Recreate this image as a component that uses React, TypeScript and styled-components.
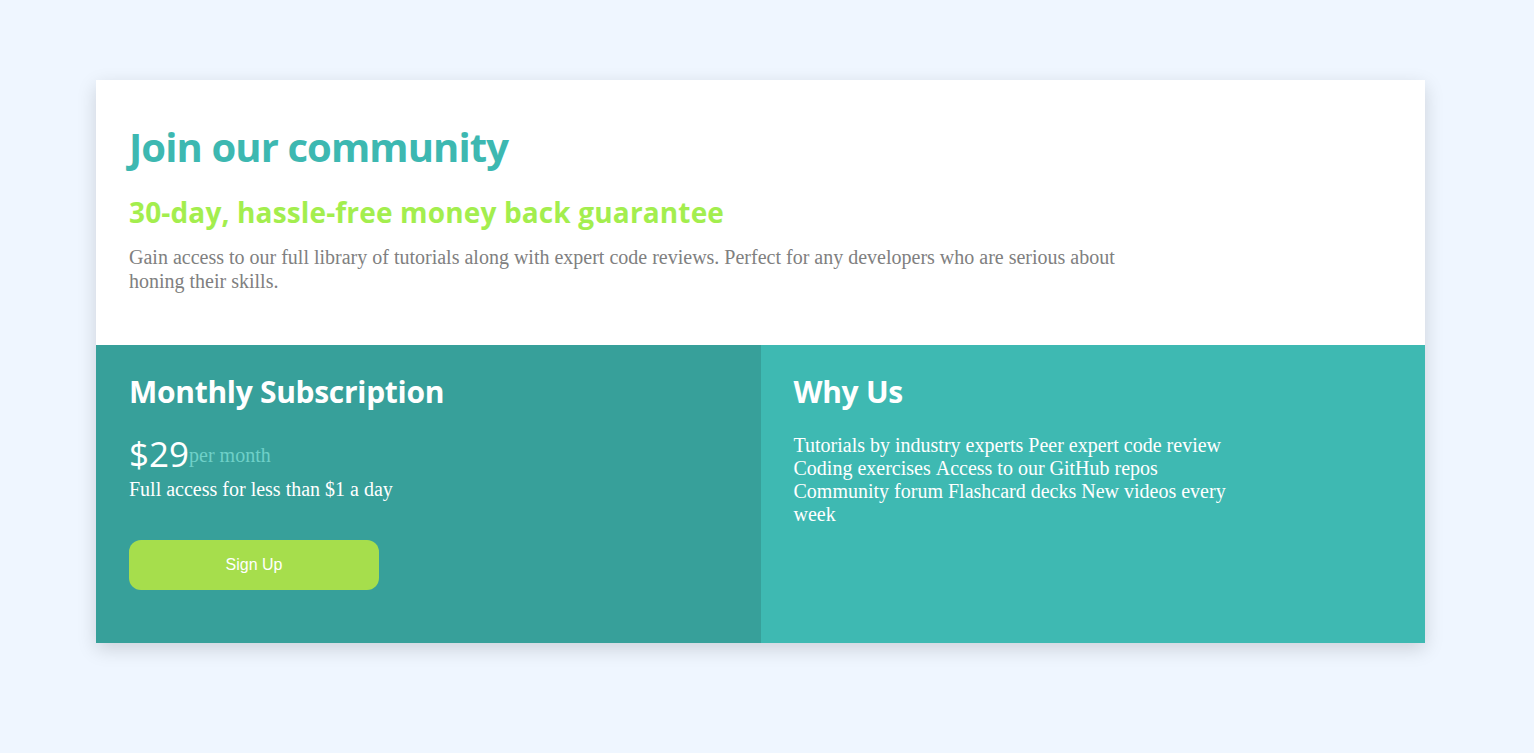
import React from "react";
import styled, { createGlobalStyle } from "styled-components";

const Global = createGlobalStyle`
  html, body { margin: 0; padding: 0; }
  body { background: #eff6ff; font-family: "Liberation Serif", "Times New Roman", serif; }
`;

const Page = styled.main`
  padding: 80px 109px 0 96px;
  min-height: 753px;
  box-sizing: border-box;
`;

const Card = styled.section`
  background: #ffffff;
  box-shadow: 0 6px 18px rgba(0, 0, 0, 0.15);
  display: flex;
  flex-direction: column;
`;

const Top = styled.div`
  padding: 39px 33px 52px;
`;

const Title = styled.h1`
  margin: 0;
  font-family: "Open Sans", "Noto Sans", sans-serif;
  font-weight: 700;
  font-size: 40px;
  line-height: 56px;
  color: #3db8b1;
  letter-spacing: -0.9px;
`;

const Sub = styled.h2`
  margin: 18px 0 0;
  font-family: "Open Sans", "Noto Sans", sans-serif;
  font-weight: 700;
  font-size: 28px;
  line-height: 38px;
  color: #a3ee4e;
  letter-spacing: 0.15px;
`;

const Lead = styled.p`
  margin: 14px 0 0;
  max-width: 1000px;
  font-size: 20px;
  line-height: 24px;
  color: #808080;
`;

const Bottom = styled.div`
  display: grid;
  grid-template-columns: 1fr 1fr;
  height: 298px;
`;

const Panel = styled.div<{ $bg: string }>`
  background: ${(p) => p.$bg};
  padding: 26px 33px 0 33px;
  color: #ffffff;
`;

const PanelTitle = styled.h3`
  margin: 0;
  font-family: "Open Sans", "Noto Sans", sans-serif;
  font-weight: 700;
  font-size: 30px;
  line-height: 42px;
  letter-spacing: -0.3px;
`;

const PriceRow = styled.div`
  margin-top: 21px;
  display: flex;
  align-items: flex-start;
  height: 40px;
`;

const Price = styled.span`
  font-family: "Open Sans", "Noto Sans", sans-serif;
  font-size: 35px;
  line-height: 40px;
`;

const Per = styled.span`
  margin-top: 10px;
  font-size: 20px;
  line-height: 23px;
  color: #6fd0c8;
`;

const Note = styled.p`
  margin: 3px 0 0;
  font-size: 20px;
  line-height: 24px;
`;

const Button = styled.button`
  display: block;
  margin-top: 39px;
  width: 250px;
  height: 50px;
  border: none;
  border-radius: 12px;
  background: #a6de4c;
  color: #ffffff;
  font-family: "Liberation Sans", Arial, sans-serif;
  font-size: 16px;
  cursor: pointer;
`;

const List = styled.ul`
  margin: 21px 0 0;
  padding: 0;
  list-style: none;
  max-width: 449px;
  font-size: 20px;
  line-height: 23px;
`;

const Item = styled.li`
  display: inline;
`;

const features = [
  "Tutorials by industry experts",
  "Peer expert code review",
  "Coding exercises",
  "Access to our GitHub repos",
  "Community forum",
  "Flashcard decks",
  "New videos every week",
];

export default function App() {
  return (
    <Page>
      <Global />
      <Card>
        <Top>
          <Title>Join our community</Title>
          <Sub>30-day, hassle-free money back guarantee</Sub>
          <Lead>
            Gain access to our full library of tutorials along with expert code reviews. Perfect for any
            developers who are serious about honing their skills.
          </Lead>
        </Top>
        <Bottom>
          <Panel $bg="#37a09a">
            <PanelTitle>Monthly Subscription</PanelTitle>
            <PriceRow>
              <Price>$29</Price>
              <Per>per month</Per>
            </PriceRow>
            <Note>Full access for less than $1 a day</Note>
            <Button>Sign Up</Button>
          </Panel>
          <Panel $bg="#3eb9b2">
            <PanelTitle>Why Us</PanelTitle>
            <List>
              {features.map((f, i) => (
                <Item key={f}>
                  {f}
                  {i < features.length - 1 ? " " : ""}
                </Item>
              ))}
            </List>
          </Panel>
        </Bottom>
      </Card>
    </Page>
  );
}
